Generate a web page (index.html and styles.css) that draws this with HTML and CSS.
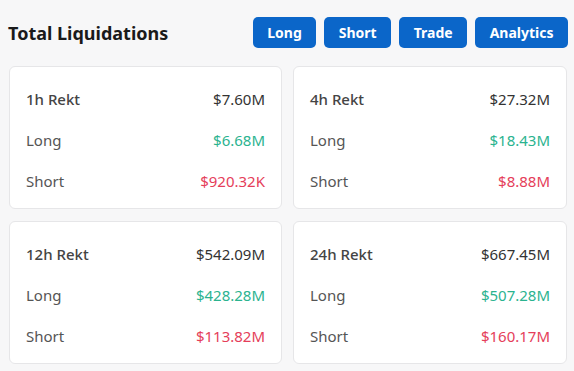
FILE: index.html
```html
<!DOCTYPE html>
<html lang="en">
<head>
    <meta charset="UTF-8">
    <meta name="viewport" content="width=device-width, initial-scale=1.0">
    <title>Total Liquidations</title>
    <link rel="stylesheet" href="styles.css">
</head>
<body>
    <div class="wrap">
        <div class="header">
            <h1>Total Liquidations</h1>
            <div class="tabs">
                <button>Long</button>
                <button>Short</button>
                <button>Trade</button>
                <button>Analytics</button>
            </div>
        </div>

        <div class="grid">
            <div class="card">
                <div class="row head"><span>1h Rekt</span><span class="val">$7.60M</span></div>
                <div class="row"><span>Long</span><span class="up">$6.68M</span></div>
                <div class="row"><span>Short</span><span class="down">$920.32K</span></div>
            </div>
            <div class="card">
                <div class="row head"><span>4h Rekt</span><span class="val">$27.32M</span></div>
                <div class="row"><span>Long</span><span class="up">$18.43M</span></div>
                <div class="row"><span>Short</span><span class="down">$8.88M</span></div>
            </div>
            <div class="card">
                <div class="row head"><span>12h Rekt</span><span class="val">$542.09M</span></div>
                <div class="row"><span>Long</span><span class="up">$428.28M</span></div>
                <div class="row"><span>Short</span><span class="down">$113.82M</span></div>
            </div>
            <div class="card">
                <div class="row head"><span>24h Rekt</span><span class="val">$667.45M</span></div>
                <div class="row"><span>Long</span><span class="up">$507.28M</span></div>
                <div class="row"><span>Short</span><span class="down">$160.17M</span></div>
            </div>
        </div>
    </div>
</body>
</html>
```

FILE: styles.css
```css
body {
    margin: 0;
    background-color: #f7f7f8;
    font-family: "Noto Sans", Arial, sans-serif;
}

.wrap {
    width: 560px;
    padding: 17px 0 0 8px;
}

.header {
    display: flex;
    justify-content: space-between;
    align-items: center;
    height: 31px;
}

h1 {
    margin: 0;
    font-size: 18px;
    font-weight: 700;
    color: #1a1a1a;
}

.tabs {
    display: flex;
    gap: 8px;
}

button {
    height: 31px;
    padding: 0 14.5px;
    border: none;
    border-radius: 5px;
    background-color: #0b66c9;
    color: #fff;
    font-family: "Noto Sans", Arial, sans-serif;
    font-size: 14px;
    font-weight: 700;
    cursor: pointer;
}

.grid {
    display: grid;
    grid-template-columns: 273px 274px;
    column-gap: 11px;
    row-gap: 12px;
    margin-top: 18px;
    padding-left: 1px;
}

.card {
    height: 143px;
    box-sizing: border-box;
    padding: 20px 16px 0 16px;
    background-color: #fff;
    border: 1px solid #e6e6e8;
    border-radius: 6px;
    display: flex;
    flex-direction: column;
    gap: 17px;
}

.row {
    display: flex;
    justify-content: space-between;
    height: 24px;
    line-height: 24px;
    font-size: 15px;
    color: #555;
}

.row.head {
    font-weight: 500;
    color: #444;
}

.val {
    color: #333;
    font-weight: 400;
}

.up {
    color: #2bb38f;
}

.down {
    color: #e53e5a;
}
```
